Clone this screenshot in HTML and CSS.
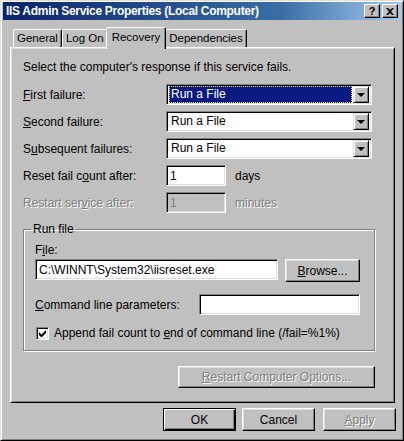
FILE: index.html
```html
<!DOCTYPE html>
<html lang="en">
<head>
    <meta charset="UTF-8">
    <title>IIS Admin Service Properties (Local Computer)</title>
    <link rel="stylesheet" href="styles.css">
</head>
<body>
    <div class="window">
        <div class="titlebar">
            <span class="title">IIS Admin Service Properties (Local Computer)</span>
            <div class="title-buttons">
                <span class="title-btn help">?</span>
                <span class="title-btn">
                    <svg width="8" height="7" viewBox="0 0 8 7"><path d="M0 0h2l2 2 2-2h2L5 3.5 8 7H6L4 5 2 7H0l3-3.5z" fill="#000"/></svg>
                </span>
            </div>
        </div>

        <div class="tabs">
            <div class="tab">General</div>
            <div class="tab">Log On</div>
            <div class="tab active">Recovery</div>
            <div class="tab">Dependencies</div>
        </div>

        <div class="panel">
            <p class="intro">Select the computer's response if this service fails.</p>

            <div class="form-grid">
                <span class="label"><u>F</u>irst failure:</span>
                <div class="select focused">
                    <span class="select-value">Run a File</span>
                    <span class="select-arrow"></span>
                </div>

                <span class="label"><u>S</u>econd failure:</span>
                <div class="select">
                    <span class="select-value">Run a File</span>
                    <span class="select-arrow"></span>
                </div>

                <span class="label">S<u>u</u>bsequent failures:</span>
                <div class="select">
                    <span class="select-value">Run a File</span>
                    <span class="select-arrow"></span>
                </div>

                <span class="label">Reset fail c<u>o</u>unt after:</span>
                <div class="field-row">
                    <div class="field short">1</div>
                    <span class="unit">days</span>
                </div>

                <span class="label disabled">Restart ser<u>v</u>ice after:</span>
                <div class="field-row">
                    <div class="field short off">1</div>
                    <span class="unit disabled">minutes</span>
                </div>
            </div>

            <fieldset class="group">
                <legend>Run file</legend>
                <div class="file-label">F<u>i</u>le:</div>
                <div class="file-row">
                    <div class="field path">C:\WINNT\System32\iisreset.exe</div>
                    <div class="button browse"><u>B</u>rowse...</div>
                </div>
                <div class="params-row">
                    <span><u>C</u>ommand line parameters:</span>
                    <div class="field params"></div>
                </div>
                <div class="check-row">
                    <span class="checkbox">
                        <svg width="7" height="7" viewBox="0 0 7 7"><path d="M0 2v3l2 2h1l4-4V0L2.5 4.5z" fill="#000"/></svg>
                    </span>
                    <span>Append fail count to <u>e</u>nd of command line (/fail=%1%)</span>
                </div>
            </fieldset>

            <div class="restart-row">
                <div class="button restart disabled"><u>R</u>estart Computer Options...</div>
            </div>
        </div>

        <div class="dialog-buttons">
            <div class="button default">OK</div>
            <div class="button">Cancel</div>
            <div class="button disabled"><u>A</u>pply</div>
        </div>
    </div>
</body>
</html>
```

FILE: styles.css
```css
body {
    margin: 0;
    background-color: #c0c0c0;
    font-family: 'Liberation Sans', Arial, sans-serif;
    font-size: 12px;
    color: #000;
}

.window {
    width: 404px;
    height: 441px;
    box-sizing: border-box;
    background-color: #c0c0c0;
    border: 1px solid;
    border-color: #dfdfdf #000 #000 #dfdfdf;
    box-shadow: inset 1px 1px 0 #fff, inset -1px -1px 0 #808080;
    padding: 1px 2px 2px 2px;
    display: flex;
    flex-direction: column;
}

/* title bar */
.titlebar {
    height: 18px;
    display: flex;
    align-items: center;
    justify-content: space-between;
    padding: 0 3px 0 3px;
    background: linear-gradient(90deg, #0a246a 0%, #3a6ea5 70%, #a6caf0 100%);
}

.title {
    color: #fff;
    font-weight: bold;
    font-size: 12px;
    letter-spacing: -0.3px;
}

.title-buttons {
    display: flex;
    gap: 2px;
}

.title-btn {
    width: 16px;
    height: 14px;
    box-sizing: border-box;
    background-color: #c0c0c0;
    border: 1px solid;
    border-color: #fff #000 #000 #fff;
    box-shadow: inset -1px -1px 0 #808080;
    display: flex;
    align-items: center;
    justify-content: center;
    font-weight: bold;
    font-size: 11px;
    line-height: 1;
}

/* tabs */
.tabs {
    display: flex;
    align-items: flex-end;
    height: 20px;
    margin: 7px 0 0 7px;
    padding-left: 3px;
    font-size: 11.5px;
}

.tab {
    height: 18px;
    box-sizing: border-box;
    padding: 0 3px;
    line-height: 17px;
    border-top: 1px solid #fff;
    border-left: 1px solid #fff;
    border-right: 1px solid #000;
    border-radius: 2px 2px 0 0;
    box-shadow: inset -1px 0 0 #808080;
}

.tab.active {
    height: 22px;
    margin: 0 -1px -2px -2px;
    padding: 0 5px;
    line-height: 18px;
    background-color: #c0c0c0;
    position: relative;
    z-index: 1;
}

/* tab page */
.panel {
    height: 356px;
    box-sizing: border-box;
    margin: 0 6px 0 7px;
    padding: 12px 18px 0 12px;
    border: 1px solid;
    border-color: #fff #000 #000 #fff;
    box-shadow: inset 1px 1px 0 #dfdfdf, inset -1px -1px 0 #808080;
}

.intro {
    margin: 0;
    line-height: 14px;
}

.form-grid {
    display: grid;
    grid-template-columns: 143px 1fr;
    grid-auto-rows: 21px;
    row-gap: 6px;
    align-items: center;
    margin-top: 10px;
}

.disabled {
    color: #808080;
    text-shadow: 1px 1px 0 #fff;
}

.field,
.select {
    height: 21px;
    box-sizing: border-box;
    background-color: #fff;
    border: 1px solid;
    border-color: #808080 #fff #fff #808080;
    box-shadow: inset 1px 1px 0 #000, inset -1px -1px 0 #dfdfdf;
    padding: 2px 3px;
    line-height: 17px;
    white-space: nowrap;
}

.field.off {
    background-color: #c0c0c0;
    color: #808080;
}

.select {
    width: 206px;
    display: flex;
    align-items: center;
    padding: 2px;
}

.select-value {
    flex: 1;
    height: 17px;
    line-height: 17px;
    padding-left: 2px;
}

.select.focused .select-value {
    background-color: #0a1a80;
    color: #fff;
    outline: 1px dotted #e8e060;
    outline-offset: -1px;
    margin-right: 1px;
}

.select-arrow {
    width: 16px;
    height: 17px;
    box-sizing: border-box;
    background-color: #c0c0c0;
    border: 1px solid;
    border-color: #dfdfdf #000 #000 #dfdfdf;
    box-shadow: inset 1px 1px 0 #fff, inset -1px -1px 0 #808080;
    display: flex;
    align-items: center;
    justify-content: center;
}

.select-arrow::after {
    content: '';
    border-left: 4px solid transparent;
    border-right: 4px solid transparent;
    border-top: 4px solid #000;
    margin-top: 1px;
}

.field-row {
    display: flex;
    align-items: center;
}

.field.short {
    width: 60px;
}

.unit {
    margin-left: 9px;
}

/* run file group */
.group {
    width: 352px;
    box-sizing: border-box;
    margin: 9px 0 0 0;
    padding: 7px 14px 10px 11px;
    border: 1px solid #808080;
    box-shadow: inset 1px 1px 0 #fff, 1px 1px 0 #fff;
}

.group legend {
    padding: 0 2px;
    margin-left: -4px;
    line-height: 14px;
}

.file-label {
    line-height: 14px;
}

.file-row {
    display: flex;
    gap: 7px;
    margin-top: 2px;
}

.field.path {
    width: 243px;
}

.params-row {
    display: flex;
    align-items: center;
    justify-content: space-between;
    margin-top: 12px;
}

.field.params {
    width: 161px;
}

.check-row {
    display: flex;
    align-items: center;
    gap: 5px;
    margin-top: 11px;
    padding-left: 1px;
}

.checkbox {
    width: 13px;
    height: 13px;
    box-sizing: border-box;
    background-color: #fff;
    border: 1px solid;
    border-color: #808080 #fff #fff #808080;
    box-shadow: inset 1px 1px 0 #000, inset -1px -1px 0 #dfdfdf;
    display: flex;
    align-items: center;
    justify-content: center;
}

/* buttons */
.button {
    height: 23px;
    box-sizing: border-box;
    background-color: #c0c0c0;
    border: 1px solid;
    border-color: #fff #000 #000 #fff;
    box-shadow: inset -1px -1px 0 #808080, inset 1px 1px 0 #dfdfdf;
    display: flex;
    align-items: center;
    justify-content: center;
    white-space: nowrap;
}

.button.browse {
    width: 75px;
}

.restart-row {
    display: flex;
    justify-content: flex-end;
    margin-top: 15px;
}

.button.restart {
    width: 197px;
    height: 22px;
    margin-right: 1px;
}

.dialog-buttons {
    display: flex;
    justify-content: flex-end;
    gap: 6px;
    margin-top: 5px;
    padding-right: 5px;
}

.dialog-buttons .button {
    width: 73px;
}

.dialog-buttons .button:nth-child(3) {
    margin-left: 2px;
}

.button.default {
    border: 1px solid #000;
    box-shadow: inset 1px 1px 0 #fff, inset -1px -1px 0 #000, inset -2px -2px 0 #808080;
}
```
